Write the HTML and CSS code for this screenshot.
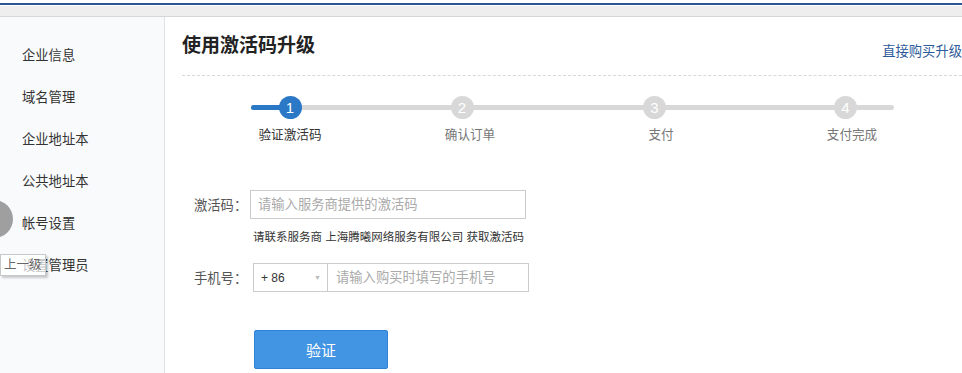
FILE: index.html
```html
<!DOCTYPE html>
<html lang="zh-CN">
<head>
  <meta charset="UTF-8">
  <title>使用激活码升级</title>
  <link rel="stylesheet" href="styles.css">
</head>
<body>

  <div class="topbar">
    <div class="topbar-inner"></div>
  </div>

  <div class="layout">
    <aside class="sidebar">
      <ul class="nav">
        <li>企业信息</li>
        <li>域名管理</li>
        <li>企业地址本</li>
        <li>公共地址本</li>
        <li>帐号设置</li>
        <li>设置管理员</li>
      </ul>
      <!-- floating back button + its tooltip -->
      <span class="handle"></span>
      <span class="tip">上一级</span>
    </aside>

    <main class="main">
      <div class="head">
        <h1>使用激活码升级</h1>
        <a class="buy-link" href="#">直接购买升级</a>
      </div>

      <ol class="steps">
        <li class="step active"><span class="num">1</span><span class="label">验证激活码</span></li>
        <li class="step"><span class="num">2</span><span class="label">确认订单</span></li>
        <li class="step"><span class="num">3</span><span class="label">支付</span></li>
        <li class="step"><span class="num">4</span><span class="label">支付完成</span></li>
      </ol>

      <form class="form" onsubmit="return false">
        <div class="row">
          <label for="code">激活码：</label>
          <input class="input" id="code" type="text" placeholder="请输入服务商提供的激活码">
        </div>
        <p class="hint">请联系服务商 上海腾曦网络服务有限公司 获取激活码</p>

        <div class="row row-phone">
          <label for="phone">手机号：</label>
          <div class="phone-group">
            <div class="area">+ 86<span class="arrow">▼</span></div>
            <input class="phone" id="phone" type="text" placeholder="请输入购买时填写的手机号">
          </div>
        </div>

        <button class="submit" type="submit">验证</button>
      </form>
    </main>
  </div>

</body>
</html>
```

FILE: styles.css
```css
:root {
  --blue: #2a78c6;
  --track: #d8d8d8;
  --line: #cccccc;
}

body {
  margin: 0;
  font-family: "Liberation Sans", "Noto Sans CJK SC", sans-serif;
  color: #333;
  background: #fff;
  overflow: hidden;
}

.topbar {
  margin-top: 3px;
  border-top: 2px solid #2b5797;
}

.topbar-inner {
  margin-top: 1px;
  height: 10px;
  background: #eeeeee;
  border-bottom: 1px solid #d6d6d6;
}

.layout {
  display: flex;
  height: calc(100vh - 17px);
}

.sidebar {
  position: relative;
  width: 164px;
  flex-shrink: 0;
  background: #f9fafc;
  border-right: 1px solid #dfe3e8;
  padding-top: 18px;
}

.nav {
  list-style: none;
  margin: 0;
  padding: 0;
}

.nav li {
  line-height: 42px;
  padding-left: 22px;
  font-size: 13.3px;
  color: #333;
}

.handle {
  position: absolute;
  left: -25px;
  top: 183px;
  width: 38px;
  height: 38px;
  border-radius: 50%;
  background: #9f9f9f;
}

.tip {
  position: absolute;
  left: 0;
  top: 237px;
  width: 46px;
  height: 22px;
  box-sizing: border-box;
  padding-left: 3px;
  border: 1px solid #c8c8c8;
  background: rgba(255, 255, 255, 0.7);
  box-shadow: 2px 2px 2px rgba(0, 0, 0, 0.2);
  font-size: 12.5px;
  line-height: 20px;
  color: #666;
  white-space: nowrap;
  overflow: hidden;
}

.main {
  flex: 1;
  padding: 15px 0 0 17px;
}

.head {
  display: flex;
  justify-content: space-between;
  align-items: flex-start;
  padding-bottom: 13px;
  border-bottom: 1px dashed #d8d8d8;
}

.head h1 {
  margin: 0;
  font-size: 19px;
  line-height: 28px;
  font-weight: bold;
  color: #222;
}

.buy-link {
  margin-top: 10px;
  font-size: 13.3px;
  line-height: 20px;
  color: #2d5a9a;
  text-decoration: none;
  white-space: nowrap;
}

/* progress steps */
.steps {
  position: relative;
  display: flex;
  list-style: none;
  margin: 20px 0 0;
  padding: 0 0 0 58px;
}

.steps::before,
.steps::after {
  content: "";
  position: absolute;
  left: 69px;
  top: 9px;
  height: 5px;
  border-radius: 3px;
}

.steps::before {
  width: 643px;
  background: var(--track);
}

.steps::after {
  width: 40px;
  background: var(--blue);
}

.step {
  position: relative;
  z-index: 1;
  width: 100px;
  display: flex;
  flex-direction: column;
  align-items: center;
}

.step + .step { margin-left: 91px; }
.step:nth-child(2) { margin-left: 80px; }
.step + .step .num { margin-right: 13px; }
.step:nth-child(2) .num { margin-right: 16px; }

.num {
  width: 23px;
  height: 23px;
  border-radius: 50%;
  background: var(--track);
  color: #fff;
  font-size: 15px;
  line-height: 23px;
  text-align: center;
}

.label {
  margin-top: 7px;
  font-size: 12.6px;
  line-height: 18px;
  color: #777;
}

.step.active .num { background: var(--blue); }
.step.active .label { color: #333; }

/* form */
.form {
  margin-top: 46px;
  padding-left: 12px;
}

.row {
  display: flex;
  align-items: center;
}

.row label {
  width: 56px;
  font-size: 13.3px;
  color: #555;
}

.input {
  width: 276px;
  height: 29px;
  box-sizing: border-box;
  border: 1px solid var(--line);
  padding: 0 7px;
  font: 13.3px "Liberation Sans", "Noto Sans CJK SC", sans-serif;
  color: #333;
  outline: none;
}

.input::placeholder,
.phone::placeholder {
  color: #aaa;
}

.hint {
  margin: 9px 0 0 59px;
  font-size: 11.5px;
  line-height: 18px;
  color: #333;
}

.row-phone {
  margin-top: 17px;
}

.phone-group {
  display: flex;
  margin-left: 3px;
  width: 276px;
  height: 29px;
  box-sizing: border-box;
  border: 1px solid var(--line);
}

.area {
  width: 74px;
  box-sizing: border-box;
  border-right: 1px solid var(--line);
  padding: 0 6px 0 7px;
  display: flex;
  align-items: center;
  justify-content: space-between;
  font-size: 12px;
  color: #333;
}

.arrow {
  font-size: 7px;
  color: #bbb;
}

.phone {
  flex: 1;
  border: none;
  padding: 0 8px;
  font: 13.3px "Liberation Sans", "Noto Sans CJK SC", sans-serif;
  outline: none;
}

.submit {
  display: block;
  margin: 38px 0 0 60px;
  width: 134px;
  height: 39px;
  background: #4295e2;
  border: 1px solid #2f83d6;
  border-radius: 2px;
  color: #fff;
  font: 15px "Liberation Sans", "Noto Sans CJK SC", sans-serif;
  cursor: pointer;
}
```
